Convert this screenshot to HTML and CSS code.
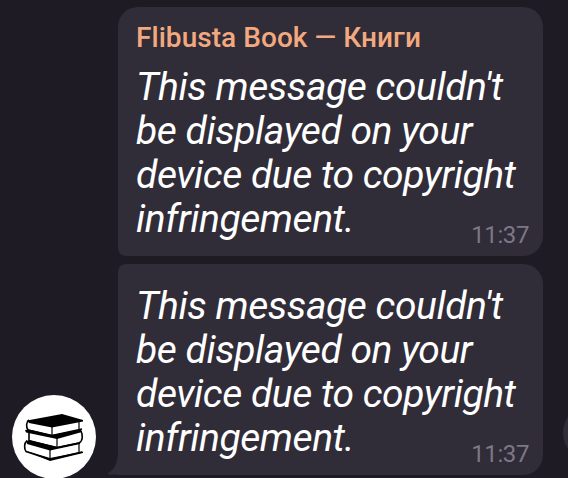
FILE: index.html
```html
<!DOCTYPE html>
<html lang="en">
  <head>
    <meta charset="UTF-8" />
    <meta name="viewport" content="width=device-width, initial-scale=1.0" />
    <title>Flibusta Book</title>
    <link rel="stylesheet" href="styles.css">
  </head>
  <body>
    <div class="chat">
      <div class="avatar">
        <svg viewBox="0 0 84 84" width="84" height="84">
          <g fill="none" stroke="#000" stroke-width="1.6" stroke-linejoin="round">
            <path d="M17 25 C14 27 14 32 16 35 L40 40.500 L70 34" />
            <path d="M40 31 V40 M67 27 V34" stroke-width="1.2" />
            <path d="M17 38 V46 L45 52.500 L67 48 C71 46 71 40 69 36" />
            <path d="M45 43 V52" stroke-width="1.2" />
            <path d="M15 45.500 C12 48 12 54 14 56.500 L38 64.500 L70 57" />
            <path d="M38 54 V64 M67 48 V57" stroke-width="1.2" />
          </g>
          <path d="M15 25.500 L50 19 L71 25 V26.500 L40 32.500 L17 28 Z" />
          <path d="M13 35 L17 34.500 L40 40 L69 34.500 L70 37 L45 44 L14 37.500 Z" />
          <path d="M14 46 L18 45 L45 52 L68 47 V49 L38 55.500 L15 49 Z" />
          <path d="M13 55.500 L38 63 L71 56.500 V58 L38 66 Z" />
        </svg>
      </div>

      <div class="messages">
        <div class="bubble first">
          <div class="sender">Flibusta Book — Книги</div>
          <div class="text">This message couldn't<br>be displayed on your<br>device due to copyright<br>infringement.</div>
          <div class="time">11:37</div>
        </div>
        <div class="bubble last">
          <div class="text">This message couldn't<br>be displayed on your<br>device due to copyright<br>infringement.</div>
          <div class="time">11:37</div>
          <svg class="tail" viewBox="0 0 14 24" width="14" height="24">
            <path d="M11 0 C11 12 7 19 1 22 Q0 23.500 3 23.500 H14 V0 Z" />
          </svg>
        </div>
      </div>

      <div class="share"></div>
    </div>
  </body>
</html>
```
FILE: styles.css
```css
body {
  margin: 0;
  overflow: hidden;
  background-color: #1e1b25;
  font-family: Roboto, "Noto Sans", sans-serif;
}

.chat {
  display: flex;
  align-items: flex-end;
  width: 568px;
  height: 479px;
  padding-left: 12px;
  box-sizing: border-box;
  overflow: hidden;
}

.avatar {
  flex-shrink: 0;
  width: 84px;
  height: 84px;
  margin-right: 22px;
  border-radius: 50%;
  background-color: #fff;
}

.avatar svg {
  display: block;
}

.messages {
  display: flex;
  flex-direction: column;
  flex-shrink: 0;
  gap: 8px;
  width: 425px;
  margin-bottom: 4px;
}

.bubble {
  position: relative;
  padding: 0 18px;
  box-sizing: border-box;
  background-color: #302c38;
}

.first {
  height: 249px;
  padding-top: 14px;
  border-radius: 20px 20px 20px 8px;
}

.last {
  height: 211px;
  padding-top: 20px;
  border-radius: 8px 20px 20px 0;
}

.sender {
  height: 44px;
  line-height: 34px;
  font-size: 28px;
  font-weight: 500;
  letter-spacing: 0.05px;
  color: #f3a97f;
  white-space: nowrap;
}

.text {
  font-size: 39px;
  font-style: italic;
  line-height: 44px;
  letter-spacing: -0.45px;
  color: #fff;
  white-space: nowrap;
}

/* sits over the empty end of the last line */
.time {
  position: absolute;
  right: 14px;
  bottom: 7px;
  font-size: 24px;
  line-height: 28px;
  letter-spacing: -0.4px;
  color: #7d7887;
}

.tail {
  position: absolute;
  left: -11px;
  bottom: 0;
  fill: #302c38;
}

/* share button, cut off by the edge of the screen */
.share {
  width: 56px;
  height: 56px;
  flex-shrink: 0;
  margin: 0 0 18px 20px;
  border-radius: 50%;
  background-color: #302c38;
}
```
